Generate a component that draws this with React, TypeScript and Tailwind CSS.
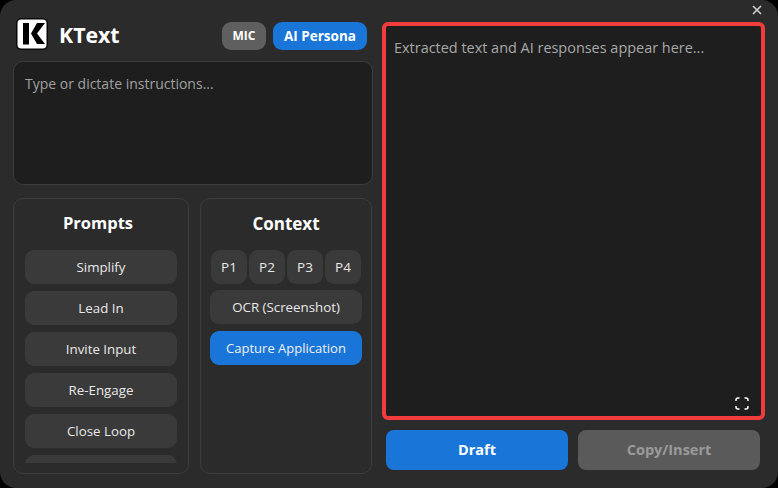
import React from 'react';

const font = { fontFamily: '"Open Sans", "Noto Sans", sans-serif' };

const prompts = ['Simplify', 'Lead In', 'Invite Input', 'Re-Engage', 'Close Loop', ''];
const pages = ['P1', 'P2', 'P3', 'P4'];

const Logo = () => (
  <svg width="32" height="32" viewBox="0 0 32 32" className="shrink-0">
    <rect x="0.75" y="0.75" width="30.5" height="30.5" rx="4.5" fill="#fff" stroke="#0a0a0a" strokeWidth="1.5" />
    <path d="M7 5h6v21.5H7z" fill="#000" />
    <path d="M21 5h8l-8 10.5 8 10.5h-8l-6-10.5z" fill="#000" />
  </svg>
);

export default function App() {
  return (
    <div className="w-[778px] h-[488px] bg-black overflow-hidden" style={font}>
      <div className="w-full h-full bg-[#2b2b2b] rounded-2xl relative flex pl-[13px] pr-[13px] pb-[14px] gap-[9px]">
        <button className="absolute right-[15px] top-[3px] text-[#d0d0d0]">
          <svg width="12" height="14" viewBox="0 0 12 14">
            <path d="M2 3l8 8M10 3l-8 8" stroke="currentColor" strokeWidth="1.6" fill="none" />
          </svg>
        </button>

        {/* Left column */}
        <div className="w-[360px] flex flex-col">
          <div className="h-[61px] flex items-center pl-[3px] pr-[6px] pt-[7px]">
            <Logo />
            <span className="ml-[11px] mt-[2px] text-[21.3px] font-bold text-white leading-none">KText</span>
            <div className="ml-auto mt-[4px] flex gap-[7px]">
              <div className="w-[44px] h-[28px] rounded-[9px] bg-[#5f5f5f] text-white text-[12px] font-bold flex items-center justify-center">MIC</div>
              <div className="w-[94px] h-[28px] rounded-[9px] bg-[#1976d8] text-white text-[13.5px] font-bold flex items-center justify-center">AI Persona</div>
            </div>
          </div>

          <div className="h-[124px] rounded-[10px] border border-[#3d3d3d] bg-[#1e1e1e] px-[11px] py-[12px] text-[14px] leading-[20px] text-[#a0a0a0]">
            Type or dictate instructions...
          </div>

          <div className="mt-[13px] h-[276px] flex gap-[11px]">
            <div className="w-[176px] rounded-[10px] border border-[#3d3d3d] px-[11px] flex flex-col">
              <h2 className="h-[51px] pt-[12px] pr-[6px] text-center text-[16.5px] font-bold text-white leading-[24px]">Prompts</h2>
              <div className="flex-1 overflow-hidden mb-[10px] flex flex-col gap-[7px]">
                {prompts.map((p, i) => (
                  <div key={i} className="h-[34px] shrink-0 rounded-[9px] bg-[#3a3a3a] pt-[2px] text-[#e8e8e8] text-[13.3px] flex items-center justify-center">
                    {p}
                  </div>
                ))}
              </div>
            </div>

            <div className="w-[172px] rounded-[10px] border border-[#3d3d3d] px-[9px] flex flex-col">
              <h2 className="h-[51px] pt-[13px] text-center text-[17px] font-bold text-white leading-[24px]">Context</h2>
              <div className="flex gap-[2px] px-[1px]">
                {pages.map((p) => (
                  <div key={p} className="w-[36px] h-[34px] rounded-[9px] bg-[#3a3a3a] text-[#e8e8e8] text-[13.5px] flex items-center justify-center">{p}</div>
                ))}
              </div>
              <div className="mt-[6px] h-[34px] rounded-[9px] bg-[#3a3a3a] pt-[2px] text-[#e8e8e8] text-[13.3px] flex items-center justify-center">OCR (Screenshot)</div>
              <div className="mt-[7px] h-[34px] rounded-[9px] bg-[#1976d8] pt-[2px] text-[#f0f0f0] text-[13px] flex items-center justify-center">Capture Application</div>
            </div>
          </div>
        </div>

        {/* Right column */}
        <div className="w-[383px] flex flex-col pt-[22px]">
          <div className="relative h-[398px] rounded-[6px] border-4 border-[#f23c3c] bg-[#1e1e1e] px-[8px] py-[12px] text-[14.45px] leading-[20px] text-[#a8a8a8]">
            Extracted text and AI responses appear here...
            <svg width="14" height="13" viewBox="0 0 14 13" className="absolute right-[12px] bottom-[6px]">
              <path d="M1 4V3a2 2 0 0 1 2-2h1.5M9.5 1H11a2 2 0 0 1 2 2v1M13 9v1a2 2 0 0 1-2 2H9.5M4.5 12H3a2 2 0 0 1-2-2V9" stroke="#fff" strokeWidth="1.5" fill="none" />
            </svg>
          </div>
          <div className="mt-[10px] pl-[4px] pr-[5px] flex gap-[10px]">
            <button className="w-[182px] h-[40px] rounded-[8px] bg-[#1976d8] text-white text-[14.5px] font-bold">Draft</button>
            <button className="w-[182px] h-[40px] rounded-[8px] bg-[#5a5a5a] text-[#9a9a9a] text-[14.5px] font-bold">Copy/Insert</button>
          </div>
        </div>
      </div>
    </div>
  );
}
